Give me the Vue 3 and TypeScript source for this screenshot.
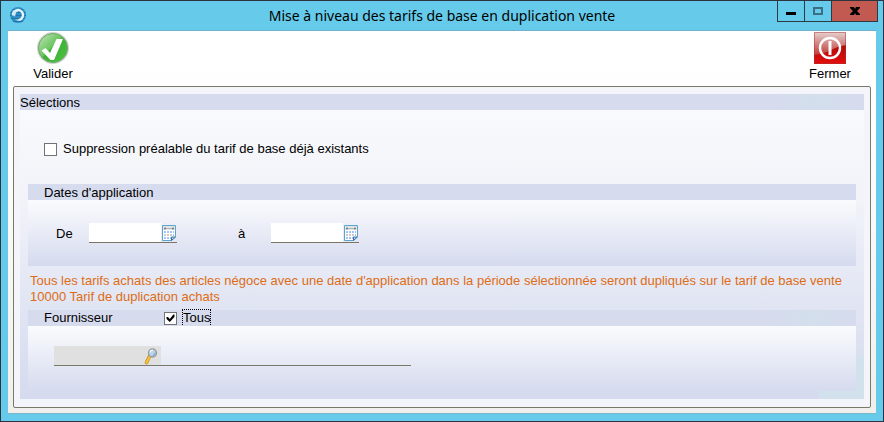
<script setup lang="ts">
import { ref } from 'vue'

const removeExisting = ref(false)
const dateFrom = ref('')
const dateTo = ref('')
const allSuppliers = ref(true)
const supplier = ref('')

const dots = Array.from({ length: 9 }, (_, i) => ({
  x: 2 + (i % 3) * 3,
  y: 6 + Math.floor(i / 3) * 3,
  fill: i >= 3 && i < 6 ? '#cfcac5' : '#a3c3fa',
}))
</script>

<template>
  <div class="window">
    <header class="titlebar">
      <svg class="app-icon" viewBox="0 0 18 18" aria-hidden="true">
        <circle cx="9" cy="9" r="8" fill="#2f8fc4" />
        <path d="M4 3.500h10M1.500 6.500h15M1 9.500h16M2 12.500h14M4 15.500h10" stroke="#1f74ab" />
        <path d="M4 9.500a5 5 0 0 1 9-3.500 5 5 0 0 1-3.500 8" fill="none" stroke="#e8f6fd" stroke-width="2.200" />
        <path d="M3.500 8.500L5 4l5 1-3 1.500-1 4z" fill="#cdebf8" />
        <path d="M6 13.500h5l-2 1.500z" fill="#bfe3f4" />
      </svg>
      <h1>Mise à niveau des tarifs de base en duplication vente</h1>
      <div class="controls">
        <button type="button" aria-label="Réduire">
          <svg viewBox="0 0 12 12"><path d="M1 7h10v3H1z" fill="#000" /></svg>
        </button>
        <button type="button" aria-label="Agrandir">
          <svg viewBox="0 0 12 12"><path d="M2 3h8v6H2z" fill="none" stroke="#3c6f83" stroke-width="2" /></svg>
        </button>
        <button type="button" class="close" aria-label="Quitter">
          <svg viewBox="0 0 12 12"><path d="M1 2h4l1 2 1-2h4v1L8 6l3 3v1H7L6 8l-1 2H1V9l3-3-3-3z" fill="#000" /></svg>
        </button>
      </div>
    </header>

    <main class="client">
      <div class="toolbar">
        <button type="button" class="tool">
          <svg viewBox="0 0 32 32" aria-hidden="true">
            <defs>
              <linearGradient id="green" x1="0" y1="0" x2="1" y2="1">
                <stop offset="0" stop-color="#c3e6bd" />
                <stop offset=".45" stop-color="#6cc55f" />
                <stop offset=".5" stop-color="#3cb034" />
                <stop offset="1" stop-color="#4fc444" />
              </linearGradient>
            </defs>
            <circle cx="16" cy="16" r="16" fill="#cfd2cf" />
            <circle cx="16" cy="16" r="14.500" fill="url(#green)" stroke="#6fab69" stroke-width="1" />
            <path d="M4.500 18.500l4-2.500 4.500 5 6.500-14h6.500L17 28h-3.500z" fill="#fff" />
          </svg>
          <span>Valider</span>
        </button>
        <button type="button" class="tool">
          <svg viewBox="0 0 32 32" aria-hidden="true">
            <defs>
              <linearGradient id="gloss" x1="0" y1="0" x2="0" y2="1">
                <stop offset="0" stop-color="#e3d2d1" />
                <stop offset="1" stop-color="#c23a36" />
              </linearGradient>
              <linearGradient id="red" x1="0" y1="0" x2="0" y2="1">
                <stop offset="0" stop-color="#8f0808" />
                <stop offset="1" stop-color="#e30d0d" />
              </linearGradient>
            </defs>
            <path d="M0 0h32v32H0z" fill="url(#red)" />
            <path d="M0 0h32v13Q24 14 17 18T0 23z" fill="url(#gloss)" />
            <path d="M.5.5h31v31H.5z" fill="none" stroke="#a33" stroke-opacity=".5" />
            <circle cx="16" cy="16" r="10" fill="none" stroke="#fff" stroke-width="2.400" />
            <path d="M14.500 9h3v14h-3z" fill="#fff" />
          </svg>
          <span>Fermer</span>
        </button>
      </div>

      <div class="frame">
        <section class="selections">
          <h2 class="bar tinted">Sélections</h2>
          <label class="check existing">
            <input v-model="removeExisting" type="checkbox" />
            <span>Suppression préalable du tarif de base déjà existants</span>
          </label>

          <section class="group dates">
            <h3 class="bar">Dates d'application</h3>
            <div class="group-body date-row">
              <template v-for="side in ['from', 'to']" :key="side">
                <label :for="side">{{ side === 'from' ? 'De' : 'à' }}</label>
                <div class="field">
                  <input v-if="side === 'from'" id="from" v-model="dateFrom" type="text" />
                  <input v-else id="to" v-model="dateTo" type="text" />
                  <button type="button" aria-label="Calendrier">
                    <svg viewBox="0 0 14 16" aria-hidden="true">
                      <path d="M.5.5h13v11l-4 4h-9z" fill="#fff" stroke="#5ba6cc" />
                      <path d="M1 1h12v4H1z" fill="#e2e5e6" />
                      <path d="M2 3.500h10" stroke="#b5b5b5" />
                      <path d="M3 2.500v2M11 2.500v2" stroke="#4a4a4a" />
                      <rect v-for="(d, i) in dots" :key="i" :x="d.x" :y="d.y" width="2" height="2" :fill="d.fill" />
                      <path d="M11 6h1v2h-1zM11 9h1v2h-1z" fill="#a3c3fa" />
                      <path d="M9.500 15.500v-3.500h4z" fill="#b8d8ee" stroke="#3b6fa5" />
                    </svg>
                  </button>
                </div>
              </template>
            </div>
          </section>

          <p class="notice">
            Tous les tarifs achats des articles négoce avec une date d'application dans la période sélectionnée seront dupliqués sur le tarif de base vente 10000 Tarif de duplication achats
          </p>

          <section class="group supplier">
            <div class="bar tinted supplier-bar">
              <label for="supplier">Fournisseur</label>
              <label class="check">
                <input v-model="allSuppliers" type="checkbox" />
                <span class="focused">Tous</span>
              </label>
            </div>
            <div class="group-body supplier-body">
              <div class="lookup">
                <div class="lookup-box">
                  <input id="supplier" v-model="supplier" type="text" :disabled="allSuppliers" />
                  <button type="button" aria-label="Rechercher" :disabled="allSuppliers">
                    <svg viewBox="0 0 16 18" aria-hidden="true">
                      <path d="M6.500 9.500L3.500 15.500" stroke="#b58a35" stroke-width="3.600" stroke-linecap="round" />
                      <path d="M6.500 10L3.500 15.500" stroke="#fbc02f" stroke-width="2.400" stroke-linecap="round" />
                      <circle cx="9.500" cy="6" r="4" fill="#b5d6e8" stroke="#9a9a9a" stroke-width="1.400" />
                      <path d="M9.500 9A3 3 0 0 0 12.500 5z" fill="#7ba9c8" />
                      <path d="M7 5.500a3 3 0 0 1 3-2.500" fill="none" stroke="#fff" stroke-width="1.200" />
                    </svg>
                  </button>
                </div>
              </div>
            </div>
          </section>
        </section>
      </div>
    </main>
  </div>
</template>

<style>
body {
  margin: 0;
  background: #66cbea;
}
</style>

<style scoped>
.window {
  box-sizing: border-box;
  display: flex;
  flex-direction: column;
  min-height: 100vh;
  padding: 0 7px 7px;
  border: 1px solid #2d3440;
  background: #66cbea;
  color: #000;
  font-family: "Liberation Sans", Arial, sans-serif;
  font-size: 13px;
  line-height: 16px;
}
button,
input {
  margin: 0;
  padding: 0;
  border: 0;
  border-radius: 0;
  background: none;
  color: inherit;
  font: inherit;
}
h1,
h2,
h3,
p {
  margin: 0;
  font-size: 13px;
  font-weight: 400;
}
svg {
  display: block;
}
.titlebar {
  display: grid;
  grid-template-columns: 1fr auto 1fr;
  height: 29px;
  border-bottom: 1px solid #6fb2cf;
}
.app-icon {
  width: 18px;
  height: 18px;
  margin: 5px 1px;
}
.titlebar h1 {
  font-family: "Noto Sans", "Open Sans", sans-serif;
  font-size: 14px;
  line-height: 30px;
}
.controls {
  display: flex;
  justify-self: end;
  height: 20px;
  margin-right: -2px;
  border: 1px solid #2d3a44;
  border-top: 0;
}
.controls button {
  display: grid;
  place-items: center;
  width: 27px;
  border-right: 1px solid #2d3a44;
}
.controls .close {
  width: 45px;
  border-right: 0;
  background: #c25a52;
}
.controls svg {
  width: 12px;
  height: 12px;
}
.client {
  display: flex;
  flex: 1;
  flex-direction: column;
  padding: 0 5px 5px;
  border-bottom: 1px solid #7bb5c8;
  background: linear-gradient(#fff, #fdfdfd 30%, #f0efec);
}
.toolbar {
  display: flex;
  justify-content: space-between;
  height: 54px;
  padding: 1px 15px 0 14px;
}
.tool {
  display: flex;
  flex-direction: column;
  align-items: center;
  gap: 2px;
  min-width: 52px;
}
.tool svg {
  width: 32px;
  height: 32px;
}
.frame {
  display: flex;
  flex: 1;
  padding: 7px 6px 8px;
  border: 1px solid #7a7869;
  border-radius: 2px;
  background: #f4f5fb;
}
.selections {
  display: flex;
  flex: 1;
  flex-direction: column;
  padding-bottom: 8px;
  background:
    linear-gradient(90deg, transparent calc(100% - 45px), #d2e2ec calc(100% - 45px)) bottom / 100% 14% no-repeat,
    linear-gradient(#fafbfd, #f1f3f9 35%, #e3e7f4 65%, #d5daee);
}
.bar {
  height: 16px;
  background: #d6dbee;
  line-height: 18px;
}
.tinted {
  background: linear-gradient(90deg, #d6dbee calc(100% - 90px), #d3dfec calc(100% - 45px), #d6dbee);
}
.check {
  display: flex;
  align-items: center;
  gap: 6px;
}
.check input {
  display: grid;
  place-content: center;
  width: 13px;
  height: 13px;
  box-sizing: border-box;
  border: 1px solid #737373;
  background: #fff;
  appearance: none;
}
.check input:checked::before {
  width: 9px;
  height: 9px;
  background: #000;
  clip-path: polygon(6% 40%, 22% 40%, 42% 60%, 82% 12%, 94% 12%, 94% 38%, 42% 95%, 6% 62%);
  content: "";
}
.existing {
  align-self: flex-start;
  margin: 30px 24px 26px;
  line-height: 18px;
}
.group {
  margin: 0 8px;
}
.group h3 {
  padding-left: 16px;
}
.group-body {
  background: linear-gradient(#fafbfd, #eaedf7 45%, #d5daee);
}
.date-row {
  display: flex;
  align-items: flex-start;
  height: 43px;
  padding: 23px 28px 0;
}
.date-row label {
  width: 33px;
  line-height: 21px;
}
.date-row .field + label {
  margin-left: 61px;
}
.field {
  display: flex;
  width: 88px;
  height: 19px;
  border-bottom: 1px solid #7c7465;
}
.field input {
  flex: 1;
  min-width: 0;
  background: #fff;
}
.field button {
  padding: 1px;
}
.field svg {
  width: 14px;
  height: 16px;
}
.notice {
  margin: 7px 10px 5px;
  color: #de6c15;
}
.supplier {
  display: flex;
  flex: 1;
  flex-direction: column;
}
.supplier-bar {
  display: flex;
  align-items: center;
  padding-left: 16px;
}
.supplier-bar > label:first-child {
  width: 120px;
}
.focused {
  line-height: 16px;
  outline: 1px dotted #000;
}
.supplier-body {
  flex: 1;
  padding: 20px 26px 0;
}
.lookup {
  max-width: 357px;
  border-bottom: 1px solid #7c7869;
}
.lookup-box {
  display: flex;
  width: 107px;
  height: 19px;
  background: #e0e0e0;
}
.lookup-box input {
  flex: 1;
  min-width: 0;
}
.lookup-box button {
  padding-right: 2px;
}
.lookup-box svg {
  width: 16px;
  height: 18px;
}
</style>
